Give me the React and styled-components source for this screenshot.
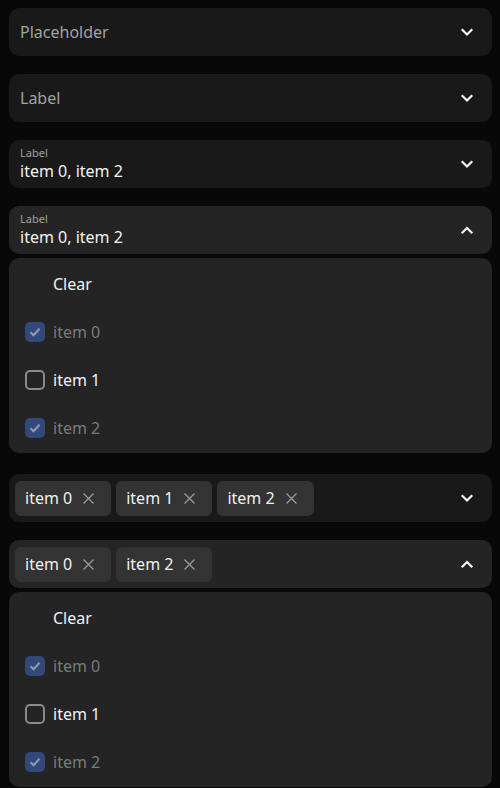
import React from "react";
import styled, { createGlobalStyle } from "styled-components";

const GlobalStyle = createGlobalStyle`
  html, body {
    margin: 0;
    padding: 0;
    background: #080808;
  }
  body {
    font-family: "Noto Sans", "Open Sans", sans-serif;
    -webkit-font-smoothing: antialiased;
  }
`;

const items = ["item 0", "item 1", "item 2"];

function Chevron({ up }) {
  return (
    <svg width="14" height="14" viewBox="0 0 14 14">
      <path
        d={up ? "M2.5 9.5 L7 5 L11.5 9.5" : "M2.5 5 L7 9.5 L11.5 5"}
        fill="none"
        stroke="#f2f2f2"
        strokeWidth="2.2"
        strokeLinecap="square"
      />
    </svg>
  );
}

function CloseIcon() {
  return (
    <svg width="13" height="13" viewBox="0 0 13 13">
      <path
        d="M1.5 1.5 L11.5 11.5 M11.5 1.5 L1.5 11.5"
        stroke="#9a9a9a"
        strokeWidth="1.3"
      />
    </svg>
  );
}

function CheckIcon() {
  return (
    <svg width="14" height="14" viewBox="0 0 14 14">
      <path
        d="M2.5 7.2 L5.6 10.2 L11.5 3.8"
        fill="none"
        stroke="#8e9bb5"
        strokeWidth="2"
      />
    </svg>
  );
}

function Select({ placeholder, label, value, chips, open, selected }) {
  return (
    <Group>
      <Field $open={open} $chips={!!chips}>
        {chips ? (
          <ChipRow>
            {chips.map((c) => (
              <Chip key={c}>
                {c}
                <CloseIcon />
              </Chip>
            ))}
          </ChipRow>
        ) : value ? (
          <ValueBox>
            <SmallLabel>{label}</SmallLabel>
            <Value>{value}</Value>
          </ValueBox>
        ) : (
          <Placeholder>{placeholder || label}</Placeholder>
        )}
        <Chevron up={open} />
      </Field>
      {open && (
        <Menu>
          <Option>
            <Spacer />
            <OptionText>Clear</OptionText>
          </Option>
          {items.map((it, i) => {
            const on = selected.includes(i);
            return (
              <Option key={it}>
                <Box $checked={on}>{on && <CheckIcon />}</Box>
                <OptionText $muted={on}>{it}</OptionText>
              </Option>
            );
          })}
        </Menu>
      )}
    </Group>
  );
}

export default function App() {
  return (
    <>
      <GlobalStyle />
      <Page>
        <Select placeholder="Placeholder" />
        <Select label="Label" />
        <Select label="Label" value="item 0, item 2" />
        <Select label="Label" value="item 0, item 2" open selected={[0, 2]} />
        <Select chips={["item 0", "item 1", "item 2"]} />
        <Select chips={["item 0", "item 2"]} open selected={[0, 2]} />
      </Page>
    </>
  );
}

const Page = styled.div`
  display: flex;
  flex-direction: column;
  gap: 18px;
  padding: 8px 8px 0 9px;
  height: 788px;
  box-sizing: border-box;
  overflow: hidden;
`;

const Group = styled.div`
  display: flex;
  flex-direction: column;
  gap: 4px;
`;

const Field = styled.div`
  height: 48px;
  flex-shrink: 0;
  box-sizing: border-box;
  border-radius: 10px;
  background: ${({ $open }) => ($open ? "#242424" : "#191919")};
  display: flex;
  align-items: center;
  justify-content: space-between;
  padding: 0 18px 0 ${({ $chips }) => ($chips ? "6px" : "11px")};
`;

const Placeholder = styled.span`
  font-size: 16px;
  color: #a3a3a3;
`;

const ValueBox = styled.div`
  display: flex;
  flex-direction: column;
`;

const SmallLabel = styled.span`
  font-size: 11px;
  line-height: 14px;
  color: #a0a0a0;
`;

const Value = styled.span`
  font-size: 16px;
  line-height: 22px;
  color: #f2f2f2;
`;

const ChipRow = styled.div`
  display: flex;
  gap: 5px;
`;

const Chip = styled.div`
  height: 35px;
  box-sizing: border-box;
  display: flex;
  align-items: center;
  gap: 10px;
  padding: 0 16px 0 10px;
  border-radius: 6px;
  background: #333333;
  font-size: 16px;
  color: #f0f0f0;
`;

const Menu = styled.div`
  background: #242424;
  border-radius: 10px;
  padding: 2px 0 1px;
  margin-bottom: 3px;
  display: flex;
  flex-direction: column;
  flex-shrink: 0;
`;

const Option = styled.div`
  height: 48px;
  display: flex;
  align-items: center;
  gap: 8px;
  padding-left: 16px;
`;

const Spacer = styled.div`
  width: 20px;
`;

const Box = styled.div`
  width: 20px;
  height: 20px;
  box-sizing: border-box;
  border-radius: 5px;
  display: flex;
  align-items: center;
  justify-content: center;
  background: ${({ $checked }) => ($checked ? "#32497a" : "transparent")};
  border: ${({ $checked }) => ($checked ? "none" : "2px solid #8a8a8a")};
`;

const OptionText = styled.span`
  font-size: 16px;
  color: ${({ $muted }) => ($muted ? "#7a7a7a" : "#f2f2f2")};
`;
